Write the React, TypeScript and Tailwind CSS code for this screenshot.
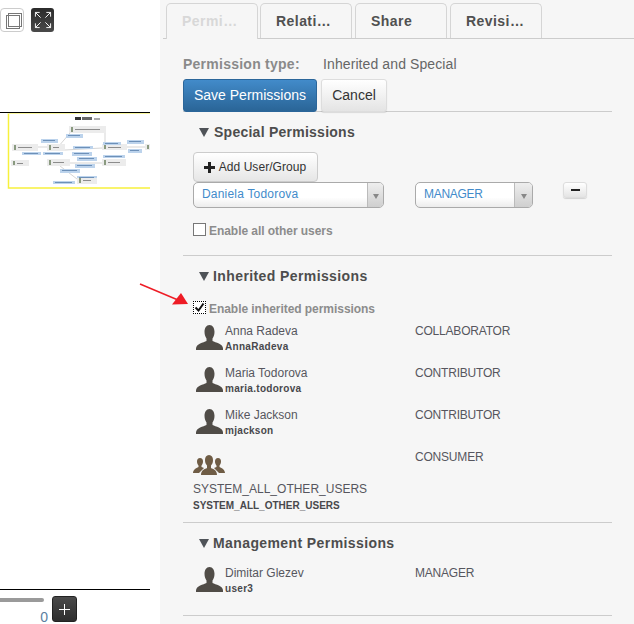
import React from 'react';

const grayNodes = [
  [69, 13, 37, 7], [12, 31, 26, 7], [47, 31, 18, 7], [11, 47, 18, 6], [47, 46, 23, 7],
  [102, 31, 25, 6], [102, 46, 24, 7], [77, 64, 20, 7], [145, 31, 5, 6],
];
const blueLabels = [
  [66, 21, 17, 4], [41, 26, 17, 4], [73, 33, 20, 3], [22, 39, 19, 3], [43, 39, 20, 3],
  [72, 39, 20, 4], [77, 44, 20, 4], [75, 51, 20, 4], [60, 56, 20, 4], [53, 68, 22, 3],
  [77, 63, 20, 2], [103, 29, 18, 3], [103, 42, 22, 3], [127, 27, 17, 4], [128, 36, 14, 4],
];

const Thumbnail = () => (
  <svg width="150" height="76" viewBox="0 0 150 76" className="block">
    <rect x="8" y="0" width="142" height="75" fill="#fff" />
    <path d="M8.5 0V75H150" fill="none" stroke="#f7f13c" strokeWidth="1.5" />
    <path d="M8 .5H150" stroke="#fbf8a0" />
    <rect x="75" y="4" width="6" height="3" fill="#333" />
    <rect x="82" y="4" width="10" height="3" fill="#666" />
    <rect x="94" y="5" width="6" height="2" fill="#aaa" />
    <path d="M70 20L58 34M65 35H47M38 34H47M65 37L102 35M127 34H145M105 20V31M70 50H102M60 53L77 66" stroke="#d5d5d5" fill="none" />
    {grayNodes.map(([x, y, w, h]) => (
      <g key={`${x}-${y}`}>
        <rect x={x} y={y} width={w} height={h} fill="#ececec" />
        <rect x={x + 2} y={y + 1} width="2" height={h - 2} fill="#8a9a80" />
        <rect x={x + 6} y={y + 3} width={Math.max(w - 12, 2)} height="1" fill="#8c8c8c" />
      </g>
    ))}
    {blueLabels.map(([x, y, w, h]) => (
      <g key={`${x}-${y}`}>
        <rect x={x} y={y} width={w} height={h} fill="#bcd3ec" />
        <rect x={x + 2} y={y + 1} width={w - 5} height="1" fill="#6d90b8" />
      </g>
    ))}
  </svg>
);

const Person = () => (
  <svg width="27" height="25" viewBox="0 0 27 25" className="shrink-0">
    <path
      d="M13.5 0c3.2 0 5 3 5 6.800 0 3-1 5.400-2 6.700v2.500c3 1.500 10.500 2.800 10.500 7.500V25H0v-1.500c0-4.700 7.500-6 10.500-7.500v-2.500c-1-1.300-2-3.700-2-6.700C8.500 3 10.300 0 13.500 0z"
      fill="#504c47"
    />
  </svg>
);

const Group = () => (
  <svg width="32" height="20" viewBox="0 0 32 20" className="block">
    <g fill="#6f5c45">
      <path d="M7 3c2 0 3 1.500 3 3.500S9 10 8.500 10.500V12L11 13l-3 3-2 2H0c0-3 3-5 5.500-6v-1.500C5 10 4 8.500 4 6.500S5 3 7 3z" />
      <path d="M25 3c-2 0-3 1.500-3 3.500s1 3.500 1.500 4V12L21 13l3 3 2 2h6c0-3-3-5-5.500-6v-1.500c.5-.5 1.500-2 1.500-4S27 3 25 3z" />
      <path d="M16 0c2.700 0 4 2.200 4 5s-1 4.500-2 5.500V13c2 1 6 2 6 7H8c0-5 4-6 6-7v-2.500c-1-1-2-2.700-2-5.500s1.300-5 4-5z" />
    </g>
  </svg>
);

const Heading = ({ title, className }: { title: string; className: string }) => (
  <h3 className={`ml-[16px] flex items-center text-[14px] font-bold leading-[20px] text-[#4d4d4d] ${className}`}>
    <span className="h-0 w-0 border-x-[5px] border-t-[9px] border-x-transparent border-t-[#4f5358]" />
    {title}
  </h3>
);

const Tab = ({ label, active, margin }: { label: string; active?: boolean; margin: string }) => (
  <div
    className={`${margin} flex w-[92px] items-center rounded-t-[5px] border border-b-0 border-[#d5d5d5] pl-[15px] text-[14px] font-bold tracking-[0.45px] ${
      active ? 'relative -mb-px h-[36px] bg-[#f6f6f6] text-[#d8d8d8]' : 'h-[35px] text-[#505050]'
    }`}
  >
    {label}
  </div>
);

const UserRow = ({ name, login, role }: { name: string; login: string; role: string }) => (
  <div className="flex h-[42px] pl-[3px] text-[12px]">
    <div className="flex w-[219px] pt-[8px]">
      <Person />
      <div className="ml-[2px] -mt-[2px]">
        <div className="text-[12px] leading-[16px] text-[#56565e]">{name}</div>
        <div className="text-[10px] font-bold leading-[16px] tracking-[0.3px] text-[#48484c]">{login}</div>
      </div>
    </div>
    <div className="pt-[6px] text-[12px] leading-[16px] tracking-[-0.2px] text-[#56565e]">{role}</div>
  </div>
);

const Select = ({ value, width, inner, tracking }: { value: string; width: string; inner: string; tracking: string }) => (
  <div className={`${width} flex h-[26px] overflow-hidden rounded-[5px] border border-[#aaa] bg-gradient-to-b from-white from-60% to-[#ececec]`}>
    <div className={`${inner} ${tracking} pl-[8px] text-[12px] leading-[22px] text-[#428bca]`}>{value}</div>
    <div className="flex flex-1 items-center justify-center border-l border-[#bbb] bg-gradient-to-b from-[#eee] to-[#cfcfcf] pt-[3px]">
      <span className="h-0 w-0 border-x-[3.5px] border-t-[5px] border-x-transparent border-t-[#888]" />
    </div>
  </div>
);

const App = () => (
  <div className="relative flex h-[624px] w-[634px] overflow-hidden bg-white font-['Liberation_Sans',Arial,sans-serif]">
    <aside className="flex w-[160px] shrink-0 flex-col bg-white">
      <div className="flex gap-[7px] pt-[8px]">
        <div className="flex h-[24px] w-[24px] items-center justify-center rounded-[4px] border border-[#ccc] bg-white">
          <svg width="22" height="22" viewBox="0 0 22 22" fill="none" stroke="#777">
            <rect x="7.5" y="4.5" width="13" height="13" />
            <rect x="5.5" y="6.5" width="13" height="13" />
          </svg>
        </div>
        <div className="flex h-[24px] w-[23px] items-center justify-center rounded-[3px] bg-gradient-to-b from-[#2b2b2b] to-[#4a4a4a]">
          <svg width="18" height="18" viewBox="0 0 19 19" fill="none" stroke="#fff" strokeWidth="1">
            <path d="M1.5 6V1.5H6M1.5 1.5L7 7M13 1.5h4.5V6M17.5 1.5L12 7M1.5 13v4.500H6M1.5 17.5L7 12M13 17.500h4.500V13M17.5 17.5L12 12" />
          </svg>
        </div>
      </div>
      <div className="mt-[80px] w-[150px] border-t border-black">
        <Thumbnail />
      </div>
      <div className="mt-[400px] w-[150px] border-t border-black">
        <div className="flex">
          <div className="flex w-[52px] flex-col">
            <div className="mt-[8px] h-[4px] w-[44px] shrink-0 rounded-r-sm bg-[#9a9a9a]" />
            <div className="mt-[8px] pr-[4px] text-right text-[14px] leading-[14px] text-[#5b7f9f]">0</div>
          </div>
          <div className="mt-[6px] flex h-[26px] w-[25px] items-center justify-center rounded-[3px] border border-[#222] bg-gradient-to-b from-[#4a4a4a] to-[#2e2e2e]">
            <svg width="11" height="11" viewBox="0 0 11 11" stroke="#fff">
              <path d="M5.5 0V11M0 5.5H11" />
            </svg>
          </div>
        </div>
      </div>
    </aside>

    <main className="min-w-0 flex-1 bg-[#f6f6f6] pt-[3px]">
      <div className="ml-[3px] flex h-[36px] items-start border-b border-[#ccc] pl-[3px]">
        <Tab label="Permi…" active margin="" />
        <Tab label="Relati…" margin="ml-[2px]" />
        <Tab label="Share" margin="ml-[3px]" />
        <Tab label="Revisi…" margin="ml-[3px]" />
      </div>

      <div className="ml-[23px] w-[429px]">
        <div className="flex h-[40px] items-center pt-[10px] text-[14px] leading-[20px]">
          <span className="w-[140px] font-bold tracking-[0.25px] text-[#8a8a8a]">Permission type:</span>
          <span className="tracking-[0.1px] text-[#666]">Inherited and Special</span>
        </div>

        <div className="flex h-[33px] gap-[4px] border-b border-[#ccc]">
          <button className="h-[33px] w-[134px] rounded-[3px] border border-[#2b669a] bg-gradient-to-b from-[#428bca] to-[#2a6597] text-[14px] text-white">
            Save Permissions
          </button>
          <button className="h-[33px] w-[66px] rounded-[3px] border border-[#ddd] bg-gradient-to-b from-white to-[#e4e4e4] text-[14px] text-[#333] shadow-[0_1px_1px_rgba(0,0,0,0.12)]">
            Cancel
          </button>
        </div>

        <div className="h-[144px] border-b border-[#ccc] pt-[10px]">
          <Heading title="Special Permissions" className="gap-[5px] tracking-[0.25px]" />
          <div className="ml-[10px] mt-[10px]">
            <button className="flex h-[30px] w-[125px] items-center justify-center gap-[4px] rounded-[4px] border border-[#ccc] bg-gradient-to-b from-white to-[#e6e6e6] pr-[1px] text-[12px] tracking-[0.06px] text-[#333]">
              <svg width="11" height="11" viewBox="0 0 11 11" fill="#222">
                <path d="M4 0h3v4h4v3H7v4H4V7H0V4h4z" />
              </svg>
              Add User/Group
            </button>
            <div className="flex items-start">
              <Select value="Daniela Todorova" width="w-[191px]" inner="w-[173px]" tracking="tracking-[0.2px]" />
              <div className="ml-[31px]">
                <Select value="MANAGER" width="w-[118px]" inner="w-[98px]" tracking="tracking-[-0.3px]" />
              </div>
              <div className="ml-[30px] flex h-[16px] w-[24px] items-center justify-center rounded-[3px] border border-[#ddd] bg-gradient-to-b from-white to-[#e4e4e4] shadow-[0_1px_1px_rgba(0,0,0,0.15)]">
                <span className="h-[2px] w-[9px] bg-[#222]" />
              </div>
            </div>
            <label className="mt-[14px] flex h-[14px] items-center text-[12px] font-bold tracking-[-0.05px] text-[#8c8c8c]">
              <span className="h-[13px] w-[13px] border border-[#777] bg-white" />
              <span className="ml-[3px] mt-[4px]">Enable all other users</span>
            </label>
          </div>
        </div>

        <div className="h-[267px] border-b border-[#ccc] pt-[10px]">
          <Heading title="Inherited Permissions" className="gap-[4px] tracking-[0.4px]" />
          <div className="ml-[10px]">
            <label className="mt-[14px] flex h-[14px] items-center text-[12px] font-bold tracking-[-0.05px] text-[#8c8c8c]">
              <span className="flex h-[13px] w-[13px] items-center justify-center border border-dotted border-black bg-white">
                <svg width="11" height="11" viewBox="0 0 11 11" fill="none" stroke="#111" strokeWidth="2">
                  <path d="M1.5 5.5L4.5 8.5L9.5 1.5" />
                </svg>
              </span>
              <span className="ml-[3px] mt-[4px]">Enable inherited permissions</span>
            </label>
            <div className="mt-[3px]">
              <UserRow name="Anna Radeva" login="AnnaRadeva" role="COLLABORATOR" />
              <UserRow name="Maria Todorova" login="maria.todorova" role="CONTRIBUTOR" />
              <UserRow name="Mike Jackson" login="mjackson" role="CONTRIBUTOR" />
              <div className="flex h-[62px]">
                <div className="w-[222px] pt-[12px] text-[12px]">
                  <Group />
                  <div className="mt-[6px] leading-[16px] text-[#56565e]">SYSTEM_ALL_OTHER_USERS</div>
                  <div className="mt-px text-[10px] font-bold leading-[16px] text-[#48484c]">SYSTEM_ALL_OTHER_USERS</div>
                </div>
                <div className="pt-[6px] text-[12px] leading-[16px] tracking-[-0.2px] text-[#56565e]">CONSUMER</div>
              </div>
            </div>
          </div>
        </div>

        <div className="h-[93px] border-b border-[#ccc] pt-[10px]">
          <Heading title="Management Permissions" className="gap-[4px] tracking-[0.4px]" />
          <div className="ml-[10px] mt-[6px]">
            <UserRow name="Dimitar Glezev" login="user3" role="MANAGER" />
          </div>
        </div>
      </div>
    </main>

    {/* annotation arrow over the page */}
    <svg width="54" height="26" viewBox="0 0 54 26" className="absolute left-[138px] top-[282px]">
      <path d="M2 2L40 18" stroke="#ee1c25" strokeWidth="1.5" />
      <path d="M34 22.5L43 11L50 22z" fill="#ee1c25" />
    </svg>
  </div>
);

export default App;
